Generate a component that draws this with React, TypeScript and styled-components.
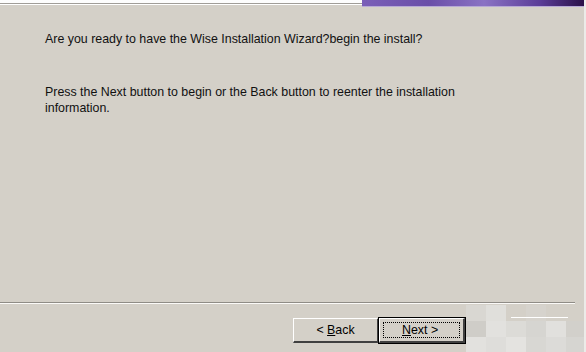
import { createGlobalStyle } from "styled-components";
import styled from "styled-components";

const Global = createGlobalStyle`
  html, body { margin:0; padding:0; background:#d4d0c8; }
  body { width:586px; height:352px; overflow:hidden; }
`;

const Dialog = styled.div`
  width:586px;
  height:352px;
  display:flex;
  flex-direction:column;
  background:#d4d0c8;
  font-family:"Liberation Sans", Arial, sans-serif;
  color:#000;
  position:relative;
  overflow:hidden;
  border-right:2px solid #ecebe8;
  box-sizing:border-box;
`;

const TopStrip = styled.div`
  display:flex;
  height:6px;
`;

const HeaderRest = styled.div`
  flex:1;
  background:#fdfdfd;
  border-bottom:1px solid #a09d98;
  box-shadow:0 1px 0 #ffffff;
  height:3px;
`;

const Banner = styled.div`
  width:222px;
  height:6px;
  background:linear-gradient(90deg,#7a5fb8 0%,#6a4ea8 30%,#8a72c4 55%,#5b3d98 80%,#2a1048 100%);
  border-bottom:1px solid #b7a9d6;
`;

const Body = styled.div`
  flex:1;
  padding:25px 40px 0 45px;
  font-size:12.4px;
  line-height:16px;
  color:#111;
`;

const Para = styled.p<{ $gap?: number }>`
  margin:0 0 ${(p) => p.$gap ?? 0}px 0;
`;

const Separator = styled.div`
  margin:0 9px 0 0;
  height:1px;
  background:#8f8c86;
  border-bottom:1px solid #fbfaf8;
`;

const Footer = styled.div`
  display:flex;
  justify-content:flex-end;
  align-items:center;
  padding:14px 0 9px 0;
  margin-right:119px;
`;

const Button = styled.div<{ $default?: boolean }>`
  width:86px;
  height:25px;
  box-sizing:border-box;
  display:flex;
  align-items:center;
  justify-content:center;
  font-size:12.4px;
  background:#d4d0c8;
  border-top:1px solid #ffffff;
  border-left:1px solid #ffffff;
  border-right:2px solid #404040;
  border-bottom:2px solid #404040;
  position:relative;
  white-space:pre;
  ${(p) => p.$default && `
    outline:1px solid #000;
    justify-content:flex-start;
    padding-left:22px;
  `}
  u { text-decoration:underline; }
`;

const Focus = styled.span`
  position:absolute;
  inset:3px;
  border:1px dotted #000;
`;

const Mosaic = styled.div`
  position:absolute;
  left:466px;
  top:305px;
  width:120px;
  height:47px;
  display:grid;
  grid-template-columns:repeat(6, 20px);
  grid-template-rows:repeat(3, 16px);
`;

const Tile = styled.div<{ $c: string }>`
  background:${(p) => p.$c};
`;

const CancelEdge = styled.div`
  position:absolute;
  left:511px;
  top:317px;
  width:57px;
  height:1px;
  background:#ffffff;
`;

const tiles = [
  "#d9d7d2", "#e0dfdb", "#d4d0c8", "#d6d3cd", "#d4d0c8", "#d4d0c8",
  "#cfcdc8", "#e2e1de", "#dcdbd7", "#d6d5d1", "#e1e0dd", "#d2d0cb",
  "#e2e1de", "#dedddA", "#e4e3e0", "#d8d7d3", "#dcdbd8", "#d6d5d1",
];

export default function App() {
  return (
    <>
      <Global />
      <Dialog>
        <TopStrip>
          <HeaderRest />
          <Banner />
        </TopStrip>
        <Body>
          <Para $gap={37}>Are you ready to have the Wise Installation Wizard?begin the install?</Para>
          <Para>
            Press the Next button to begin or the Back button to reenter the installation
            <br />
            information.
          </Para>
        </Body>
        <Separator />
        <Footer>
          <Button>{"< "}<u>B</u>ack</Button>
          <Button $default>
            <Focus />
            <u>N</u>{"ext >"}
          </Button>
        </Footer>
        <Mosaic>
          {tiles.map((c, i) => (
            <Tile key={i} $c={c} />
          ))}
        </Mosaic>
        <CancelEdge />
      </Dialog>
    </>
  );
}
